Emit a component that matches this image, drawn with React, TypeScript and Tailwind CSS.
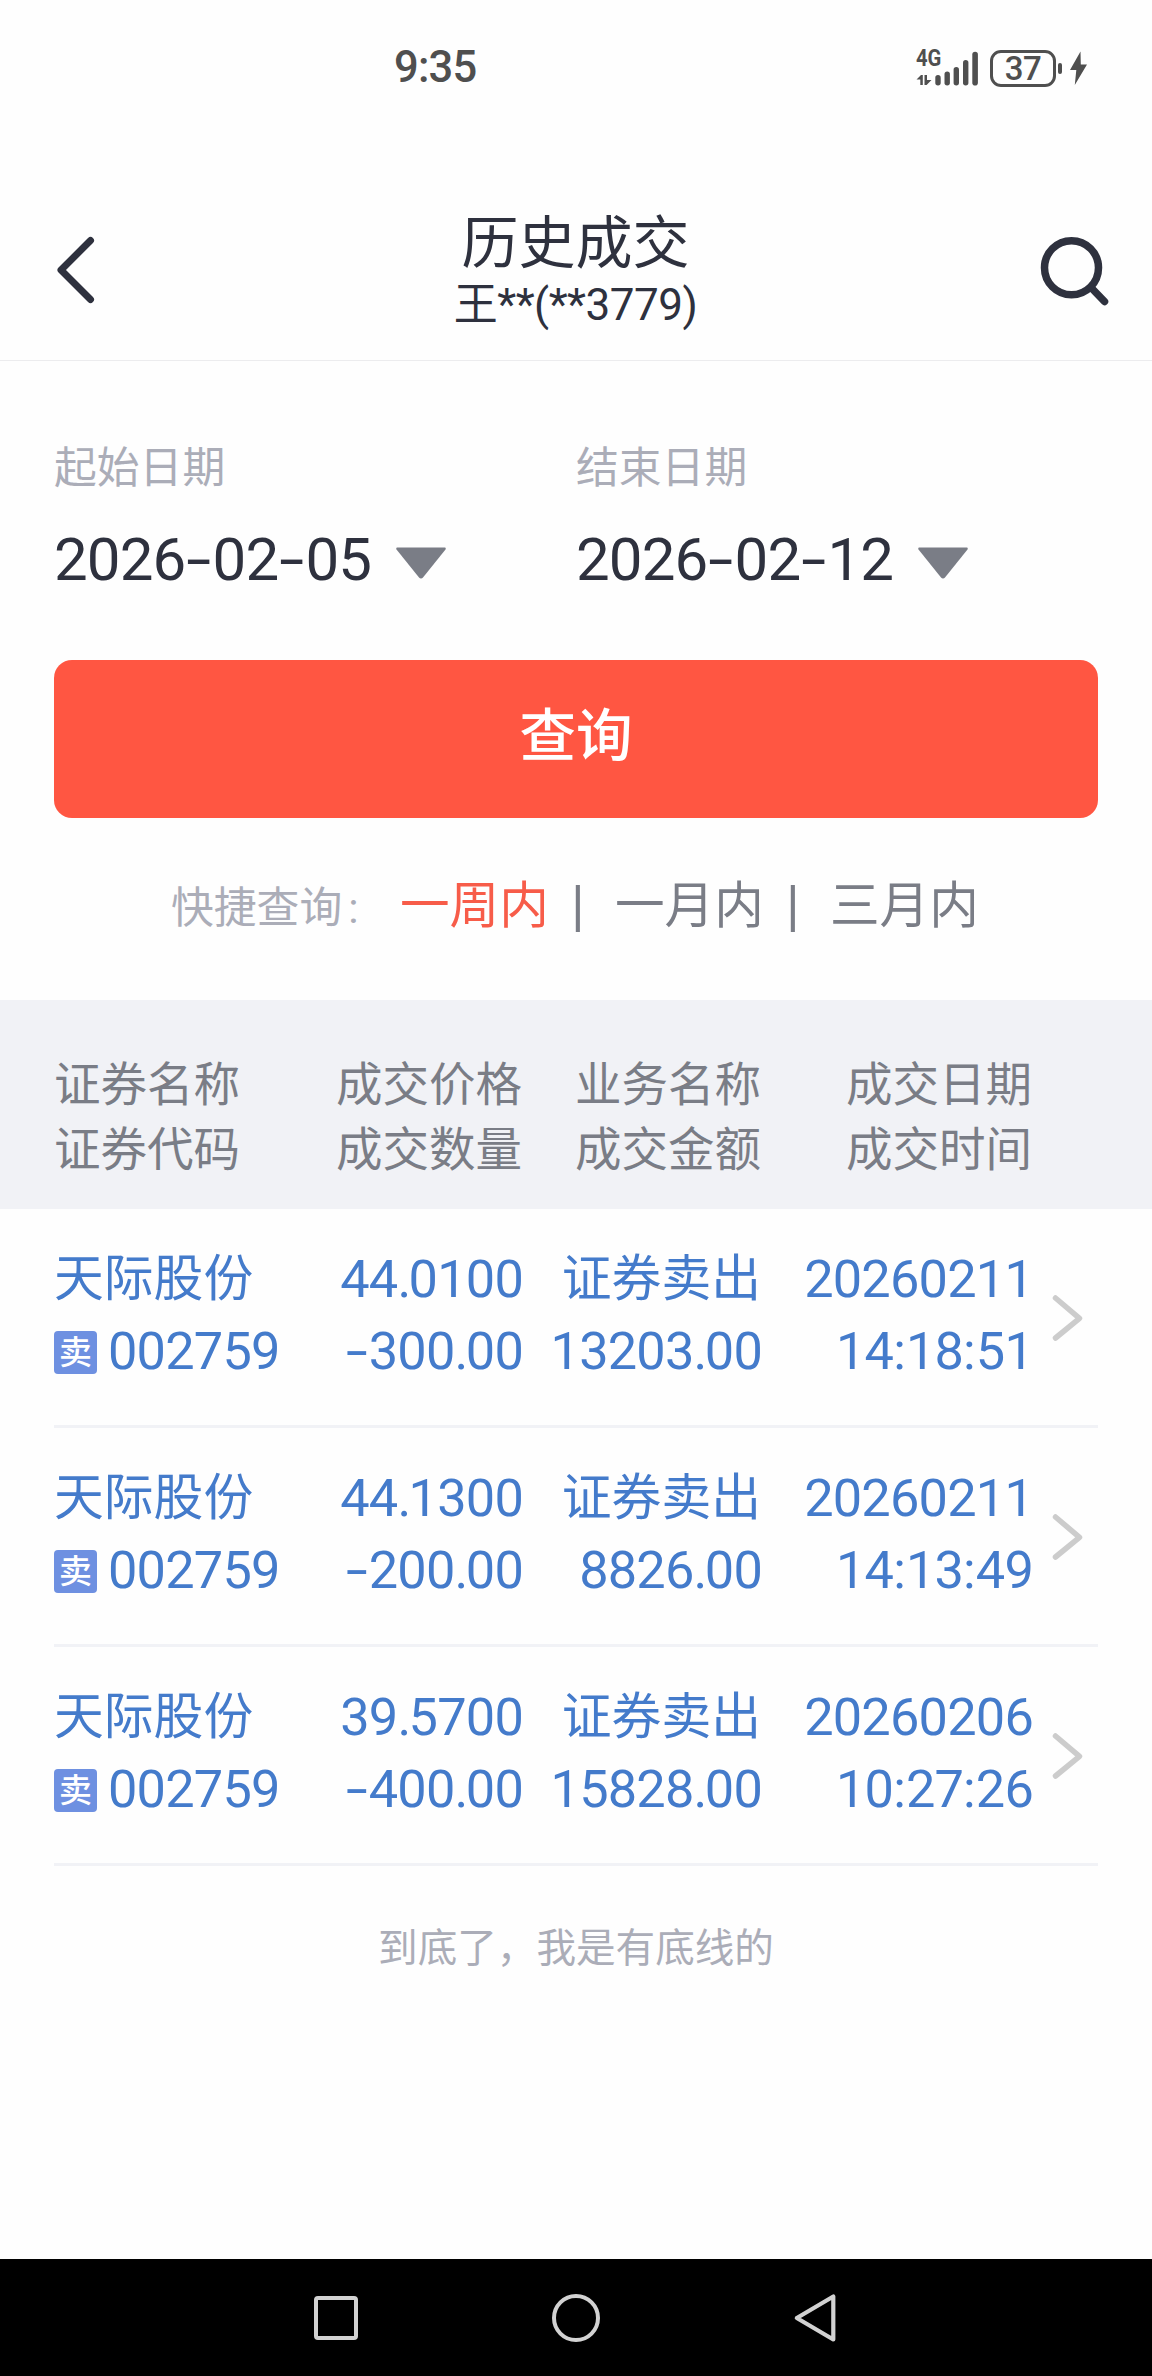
import React from "react";

type Trade = {
  name: string;
  code: string;
  price: string;
  volume: string;
  kind: string;
  amount: string;
  date: string;
  time: string;
};

const trades: Trade[] = [
  { name: "天际股份", code: "002759", price: "44.0100", volume: "-300.00", kind: "证券卖出", amount: "13203.00", date: "20260211", time: "14:18:51" },
  { name: "天际股份", code: "002759", price: "44.1300", volume: "-200.00", kind: "证券卖出", amount: "8826.00", date: "20260211", time: "14:13:49" },
  { name: "天际股份", code: "002759", price: "39.5700", volume: "-400.00", kind: "证券卖出", amount: "15828.00", date: "20260206", time: "10:27:26" },
];

const headings = [
  ["证券名称", "证券代码"],
  ["成交价格", "成交数量"],
  ["业务名称", "成交金额"],
  ["成交日期", "成交时间"],
];

const columns = "grid grid-cols-[246px_223px_239px_271px_1fr]";

/* Number with wide minus signs and tight decimal points. */
function Figure({ value }: { value: string }) {
  return (
    <span className="whitespace-nowrap tracking-[-0.015em]">
      {value.split(/([-.:])/).map((part, i) => {
        if (part === "-")
          return (
            <span key={i} className="inline-block w-[0.455em] scale-x-[1.5] text-center tracking-normal">-</span>
          );
        if (part === ".")
          return (
            <span key={i} className="tracking-[-0.05em]">.</span>
          );
        if (part === ":")
          return (
            <span key={i} className="tracking-normal">:</span>
          );
        return <React.Fragment key={i}>{part}</React.Fragment>;
      })}
    </span>
  );
}

function StatusBar() {
  return (
    <div className="flex h-[136px] items-center pl-[394px] text-[#4f4f4f]">
      <div className="w-[522px] text-[43.5px] leading-none font-medium tracking-[-0.8px]">9:35</div>
      <div className="flex h-[36px] w-[63px] items-start">
        <div className="w-[19px]">
          <div className="origin-left scale-x-[0.88] text-[23px] leading-[18px] font-bold whitespace-nowrap">4G</div>
          <svg className="mt-[6px] block" width="17" height="12" viewBox="0 0 17 12" fill="currentColor">
            <path d="M0.5 5.5L5 1h1.8v10H4.3V5.5zM8.5 1H11v5h4.5L10.6 11H8.5z" />
          </svg>
        </div>
        <svg className="mt-[1px]" width="44" height="35" viewBox="0 0 44 35" fill="currentColor">
          <rect x="0.3" y="24" width="5.4" height="10.5" rx="2.7" />
          <rect x="9.5" y="20.4" width="5.4" height="14.1" rx="2.7" />
          <rect x="18.6" y="16" width="5.4" height="18.5" rx="2.7" />
          <rect x="28" y="9" width="5.4" height="25.5" rx="2.7" />
          <rect x="37.3" y="0.7" width="5.6" height="33.8" rx="2.8" />
        </svg>
      </div>
      <div className="ml-[11px] flex h-[37px] w-[66px] items-center justify-center rounded-[11px] border-[3px] border-[#4f4f4f] text-[33px] leading-none font-medium tracking-[-0.6px]">
        37
      </div>
      <div className="ml-[2px] h-[11px] w-[4px] rounded-full bg-[#4f4f4f]" />
      <svg className="ml-[7px]" width="19" height="36" viewBox="0 0 19 36" fill="currentColor">
        <path d="M11.5 1.5L1 20h6.3L5.8 35 18 14.5h-6.2z" />
      </svg>
    </div>
  );
}

function TitleBar() {
  return (
    <div className="flex h-[225px] items-start justify-between border-b border-[#ececee] pr-[42px] pl-[55px] text-[#2e313e]">
      <svg className="mt-[98px]" width="70" height="72" viewBox="0 0 70 72" fill="none" stroke="currentColor" strokeWidth="7" strokeLinecap="round" strokeLinejoin="round">
        <path d="M35.5 6.5L6 36l29.500 29.500" />
      </svg>
      <div className="flex flex-col items-center pt-[72px] pr-[12px]">
        <div className="text-[57px] leading-[72px]">历史成交</div>
        <div className="mt-[-2px] text-[44px] leading-[54px] tracking-[-0.5px]">王**(**3779)</div>
      </div>
      <svg className="mt-[98px]" width="72" height="76" viewBox="0 0 72 76" fill="none" stroke="currentColor" strokeWidth="7.5" strokeLinecap="round">
        <circle cx="33.500" cy="33.800" r="27" />
        <path d="M53 53.500L66.500 67.500" />
      </svg>
    </div>
  );
}

function DateField({ label, value }: { label: string; value: string }) {
  return (
    <div className="w-[522px]">
      <div className="text-[42.8px] leading-[60px] text-[#abadb8]">{label}</div>
      <div className="mt-[24px] flex items-center text-[60px] leading-[76px] text-[#2e313e]">
        <div className="w-[342px]">
          <Figure value={value} />
        </div>
        <svg className="mt-[6px]" width="50" height="32" viewBox="0 0 50 32" fill="#7a7d86">
          <path d="M1.500 0.500h47c1.200 0 1.600 1 1 2L27 30.500c-1.200 1.400-2.800 1.400-4 0L0.500 2.500c-.6-1-.2-2 1-2z" />
        </svg>
      </div>
    </div>
  );
}

function QuickRanges() {
  return (
    <div className="mt-[52px] flex h-[72px] items-center pl-[171px] whitespace-nowrap text-[#7a7d86]">
      <span className="w-[229px] pt-[4px] text-[42.8px] leading-[72px] text-[#abadb8]">
        快捷查询<span className="ml-[6px]">:</span>
      </span>
      <span className="w-[171px] text-[49.6px] text-[#f75c49]">一周内</span>
      <span className="w-[44px] text-[56px] leading-[66px]">|</span>
      <span className="w-[171px] text-[49.6px]">一月内</span>
      <span className="w-[44px] text-[56px] leading-[66px]">|</span>
      <span className="text-[49.6px]">三月内</span>
    </div>
  );
}

function TradeRow({ trade }: { trade: Trade }) {
  return (
    <div className={`${columns} h-[219px] border-b-[3px] border-[#f1f2f6] pt-[34px] text-[52.3px] leading-[72px] text-[#447bcb]`}>
      <div>
        <div className="pt-px text-[49.8px] leading-[71px]">{trade.name}</div>
        <div className="flex items-center">
          <span className="mt-[3px] mr-[11px] flex size-[43px] items-center justify-center rounded-[4px] bg-[#6e90e1] text-[33px] leading-[43px] font-medium text-white">
            卖
          </span>
          <Figure value={trade.code} />
        </div>
      </div>
      <div className="text-right">
        <div><Figure value={trade.price} /></div>
        <div><Figure value={trade.volume} /></div>
      </div>
      <div className="text-right">
        <div className="pt-px pr-px text-[49.8px] leading-[71px]">{trade.kind}</div>
        <div><Figure value={trade.amount} /></div>
      </div>
      <div className="text-right">
        <div><Figure value={trade.date} /></div>
        <div><Figure value={trade.time} /></div>
      </div>
      <svg className="mt-[51px] ml-[18px]" width="34" height="48" viewBox="0 0 34 48" fill="none" stroke="#cccccc" strokeWidth="5.5" strokeLinejoin="round" strokeLinecap="round">
        <path d="M4.500 4L28.500 24.300L4.500 44" />
      </svg>
    </div>
  );
}

export default function App() {
  return (
    <div lang="zh-CN" className="flex h-[2376px] w-[1152px] flex-col overflow-hidden bg-[#fefefe] [font-family:Roboto,'Noto_Sans_CJK_SC',sans-serif]">
      <StatusBar />
      <TitleBar />
      <div className="px-[54px] pt-[77px]">
        <div className="flex">
          <DateField label="起始日期" value="2026-02-05" />
          <DateField label="结束日期" value="2026-02-12" />
        </div>
        <button className="mt-[62px] block h-[158px] w-full rounded-[18px] bg-[#ff5642] pb-[4px] text-[56.5px] leading-[72px] font-medium text-white">
          查询
        </button>
      </div>
      <QuickRanges />
      <div className={`${columns} mt-[58px] h-[209px] bg-[#f1f2f6] px-[54px] pt-[53px] text-[46.5px] leading-[65px] text-[#7a7d86]`}>
        {headings.map(([top, bottom], i) => (
          <div key={top} className={i === 0 ? "text-left" : "pr-px text-right"}>
            <div>{top}</div>
            <div>{bottom}</div>
          </div>
        ))}
      </div>
      <div className="px-[54px]">
        {trades.map((trade) => (
          <TradeRow key={trade.date + trade.time} trade={trade} />
        ))}
      </div>
      <div className="mt-[53px] text-center text-[39.6px] leading-[60px] text-[#abadb8]">到底了，我是有底线的</div>
      <div className="mt-auto flex h-[117px] items-center bg-black pl-[314px]">
        <div className="size-[44px] rounded-[4px] border-4 border-[#d2d2d2]" />
        <div className="ml-[194px] size-[48px] rounded-full border-4 border-[#d2d2d2]" />
        <svg className="ml-[193px]" width="44" height="50" viewBox="0 0 44 50" fill="none" stroke="#d2d2d2" strokeWidth="4.200" strokeLinejoin="round">
          <path d="M40.300 3.500V46.500L3.800 25z" />
        </svg>
      </div>
    </div>
  );
}
